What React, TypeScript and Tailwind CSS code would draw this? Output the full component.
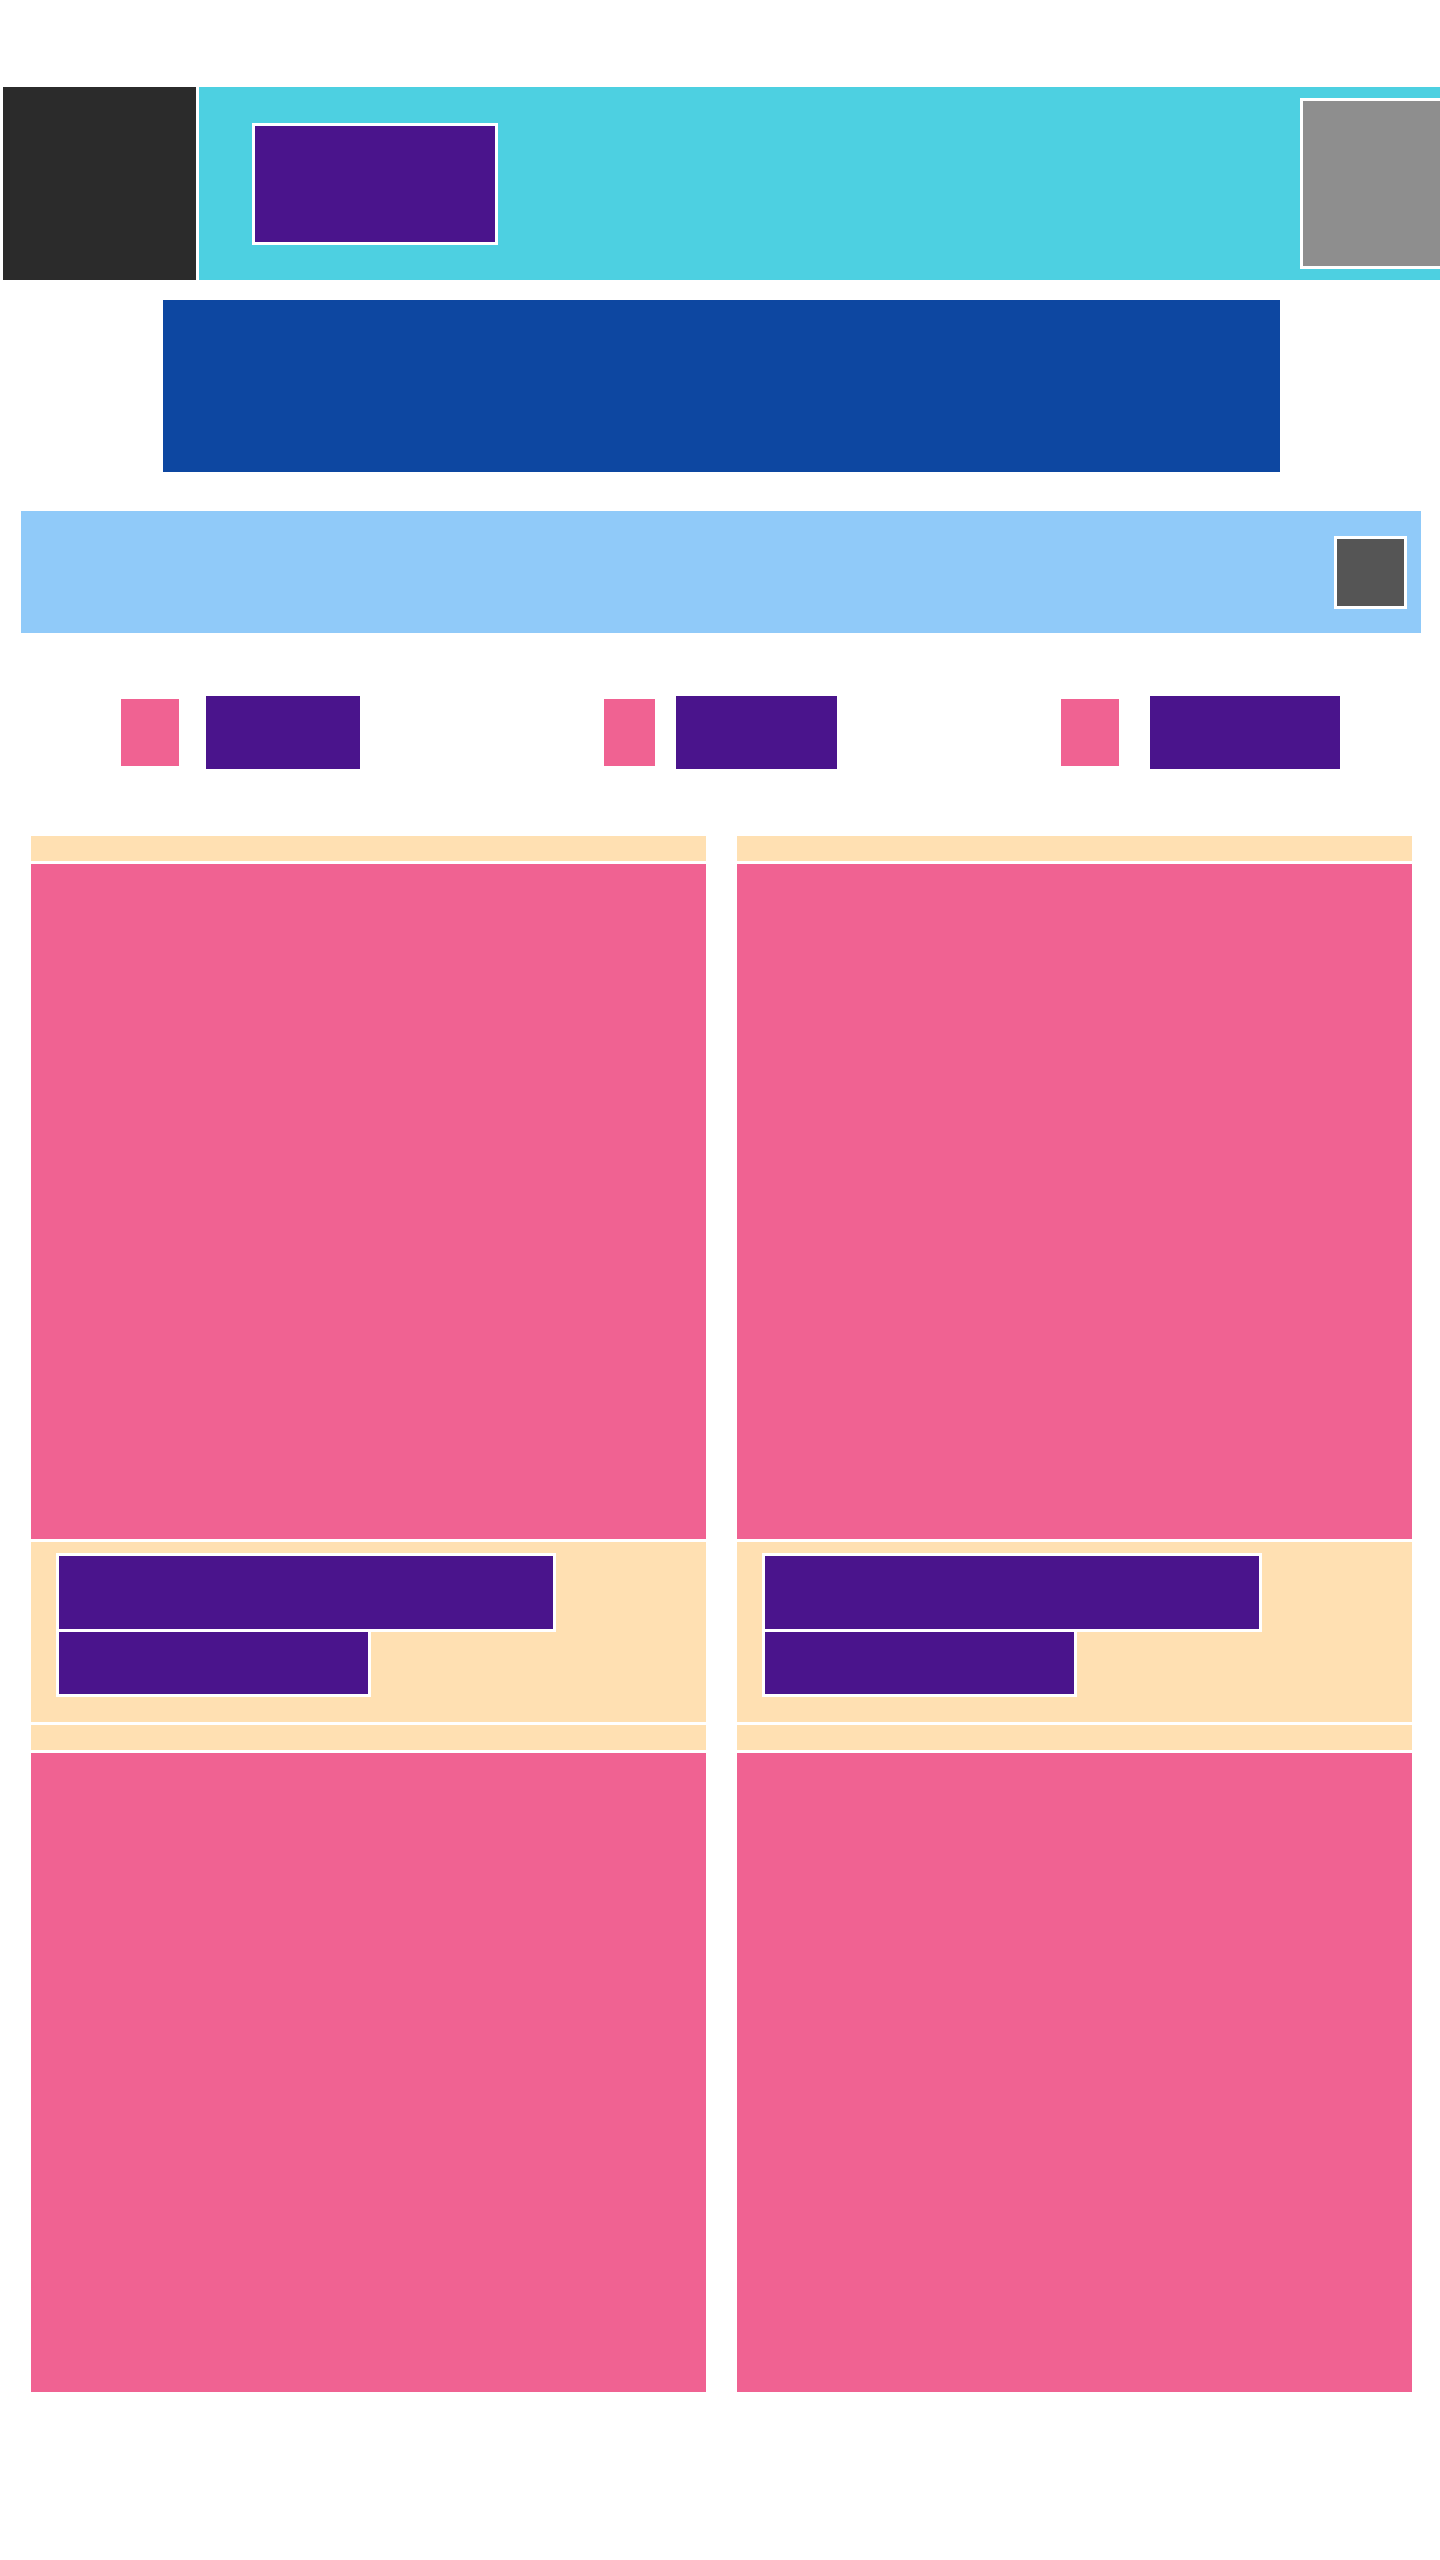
import React from "react";

function Column() {
  return (
    <div className="flex flex-col gap-[3px] w-[675px] shrink-0">
      <div className="h-[25px] bg-[#ffe0b2]" />
      <div className="h-[675px] bg-[#f06292]" />
      <div className="h-[180px] bg-[#ffe0b2] pt-[11px] pl-[25px] flex flex-col items-start">
        <div className="w-[500px] h-[79px] border-[3px] border-white bg-[#4a148c]" />
        <div className="w-[315px] h-[65px] border-[3px] border-t-0 border-white bg-[#4a148c]" />
      </div>
      <div className="h-[25px] bg-[#ffe0b2]" />
      <div className="h-[639px] bg-[#f06292]" />
    </div>
  );
}

function Item({ pink, gap, purple }: { pink: string; gap: string; purple: string }) {
  return (
    <div className="flex items-center justify-center">
      <div className={`${pink} h-[67px] bg-[#f06292] shrink-0`} />
      <div className={`${gap} ${purple} h-[73px] bg-[#4a148c] shrink-0`} />
    </div>
  );
}

export default function App() {
  return (
    <div className="w-[1440px] min-h-[2560px] bg-white overflow-hidden pt-[87px]">
      {/* Header */}
      <div className="flex h-[193px] pl-[3px] gap-[3px]">
        <div className="w-[193px] shrink-0 h-full bg-[#2b2b2b]" />
        <div className="w-[1300px] shrink-0 h-full bg-[#4dd0e1] flex items-center">
          <div className="ml-[53px] w-[246px] h-[122px] shrink-0 border-[3px] border-white bg-[#4a148c]" />
          <div className="ml-[802px] w-[171px] h-[171px] shrink-0 border-[3px] border-white bg-[#8e8e8e]" />
        </div>
      </div>

      {/* Hero banner */}
      <div className="mt-[20px] ml-[163px] w-[1117px] h-[172px] bg-[#0d47a1]" />

      {/* Light blue bar */}
      <div className="mt-[39px] ml-[21px] w-[1400px] h-[122px] bg-[#90caf9] flex items-center justify-end pr-[14px]">
        <div className="w-[73px] h-[73px] border-[3px] border-white bg-[#555555]" />
      </div>

      {/* Feature row */}
      <div className="mt-[63px] grid grid-cols-3 h-[73px]">
        <Item pink="w-[58px]" gap="ml-[27px]" purple="w-[154px]" />
        <Item pink="w-[51px]" gap="ml-[21px]" purple="w-[161px]" />
        <Item pink="w-[58px]" gap="ml-[31px]" purple="w-[190px]" />
      </div>

      {/* Columns */}
      <div className="mt-[67px] ml-[31px] flex gap-[31px]">
        <Column />
        <Column />
      </div>
    </div>
  );
}
